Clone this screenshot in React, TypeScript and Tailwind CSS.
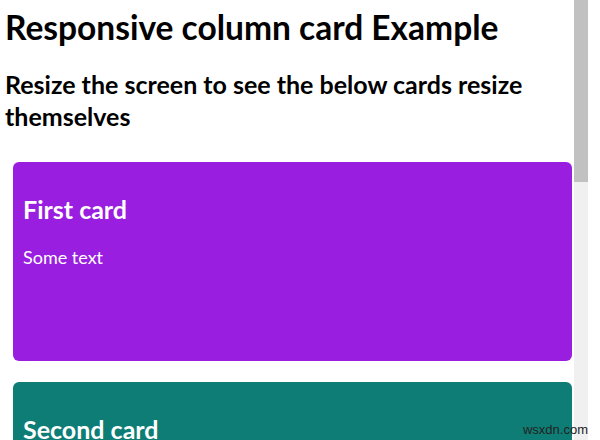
export default function App() {
  const cards = [
    { title: 'First card', text: 'Some text', bg: 'bg-[#9a1ee0]' },
    { title: 'Second card', text: 'Some text', bg: 'bg-[#0e7d75]' },
  ]

  return (
    <div className="relative flex h-[440px] overflow-hidden bg-white font-['Lato','Open_Sans',sans-serif] text-black">
      {/* page content */}
      <div className="w-[574px] shrink-0">
        <h1 className="ml-[5px] mt-[7px] text-[33.5px] font-bold leading-[40px]">
          Responsive column card Example
        </h1>
        <h2 className="ml-[5px] mt-[21px] text-[25px] font-bold leading-[32px]">
          Resize the screen to see the below cards resize themselves
        </h2>

        <div className="ml-[13px] mt-[30px] flex w-[559px] flex-col gap-[21px]">
          {cards.map((c) => (
            <div key={c.title} className={`h-[199px] rounded-[6px] px-[10px] pt-[31px] text-white ${c.bg}`}>
              <h3 className="text-[25px] font-bold leading-[32px]">{c.title}</h3>
              <p className="mt-[20px] text-[18px] leading-[24px]">{c.text}</p>
            </div>
          ))}
        </div>
      </div>

      {/* scrollbar */}
      <div className="w-[14px] shrink-0 bg-[#f0f0f0]">
        <div className="h-[182px] bg-[#c1c1c1]" />
      </div>
      <div className="flex-1 bg-white" />

      {/* watermark */}
      <span className="absolute bottom-[2px] right-[12px] font-['Liberation_Sans',sans-serif] text-[13px] leading-[16px] text-[#222]">
        wsxdn.com
      </span>
    </div>
  )
}
